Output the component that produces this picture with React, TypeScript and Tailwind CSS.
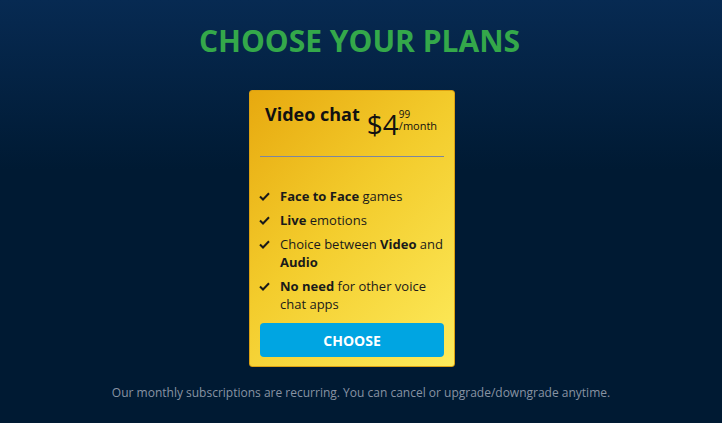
import React from "react";

function Check() {
  return (
    <svg width="11" height="9" viewBox="0 0 11 9" className="shrink-0 mt-[5px] ml-[-1px]">
      <path d="M1 4.5 L4 7.5 L10 1.2" fill="none" stroke="#1a1a1a" strokeWidth="2" />
    </svg>
  );
}

export default function App() {
  const items: React.ReactNode[] = [
    <><b>Face to Face</b> games</>,
    <><b>Live</b> emotions</>,
    <>Choice between <b>Video</b> and <b>Audio</b></>,
    <><b>No need</b> for other voice chat apps</>,
  ];
  return (
    <div
      className="w-[722px] h-[423px] flex flex-col items-center bg-[linear-gradient(180deg,#072a52_0px,#001a33_170px,#001a33_100%)]"
      style={{ fontFamily: '"Open Sans", sans-serif' }}
    >
      <h1 className="mt-[21px] mr-[3px] text-[30px] leading-[40px] font-bold text-[#34a84a]">
        CHOOSE YOUR PLANS
      </h1>
      <div className="mt-[29px] mr-[18px] w-[206px] h-[277px] rounded-[3px] border border-[#dca112] bg-[linear-gradient(135deg,#e7a90f_0%,#f3cc2c_45%,#fdeb5c_100%)] px-[10px] pt-[11px] flex flex-col">
        <div className="flex items-start px-[5px]">
          <div className="text-[18px] leading-[25px] font-bold text-[#111]">Video chat</div>
          <div className="ml-[7px] mt-[5px] flex items-start text-[#111]">
            <span className="text-[28px] leading-[34px] font-normal">$4</span>
            <span className="flex flex-col mt-[2px]">
              <span className="text-[10px] leading-[10px]">99</span>
              <span className="text-[11px] leading-[14px]">/month</span>
            </span>
          </div>
        </div>
        <div className="mt-[15px] h-px bg-[#7c86a0]" />
        <ul className="mt-[30px] mr-[-6px] flex flex-col gap-[6px]">
          {items.map((it, i) => (
            <li key={i} className="flex gap-[10px] text-[13px] leading-[18px] text-[#1a1a1a]">
              <Check />
              <span>{it}</span>
            </li>
          ))}
        </ul>
        <button className="mt-[10px] h-[34px] w-full rounded-[4px] bg-[#00a5e2] text-white font-bold text-[14px]">
          CHOOSE
        </button>
      </div>
      <p className="mt-[18px] text-[12px] leading-[16px] text-[#8893a3]">
        Our monthly subscriptions are recurring. You can cancel or upgrade/downgrade anytime.
      </p>
    </div>
  );
}
